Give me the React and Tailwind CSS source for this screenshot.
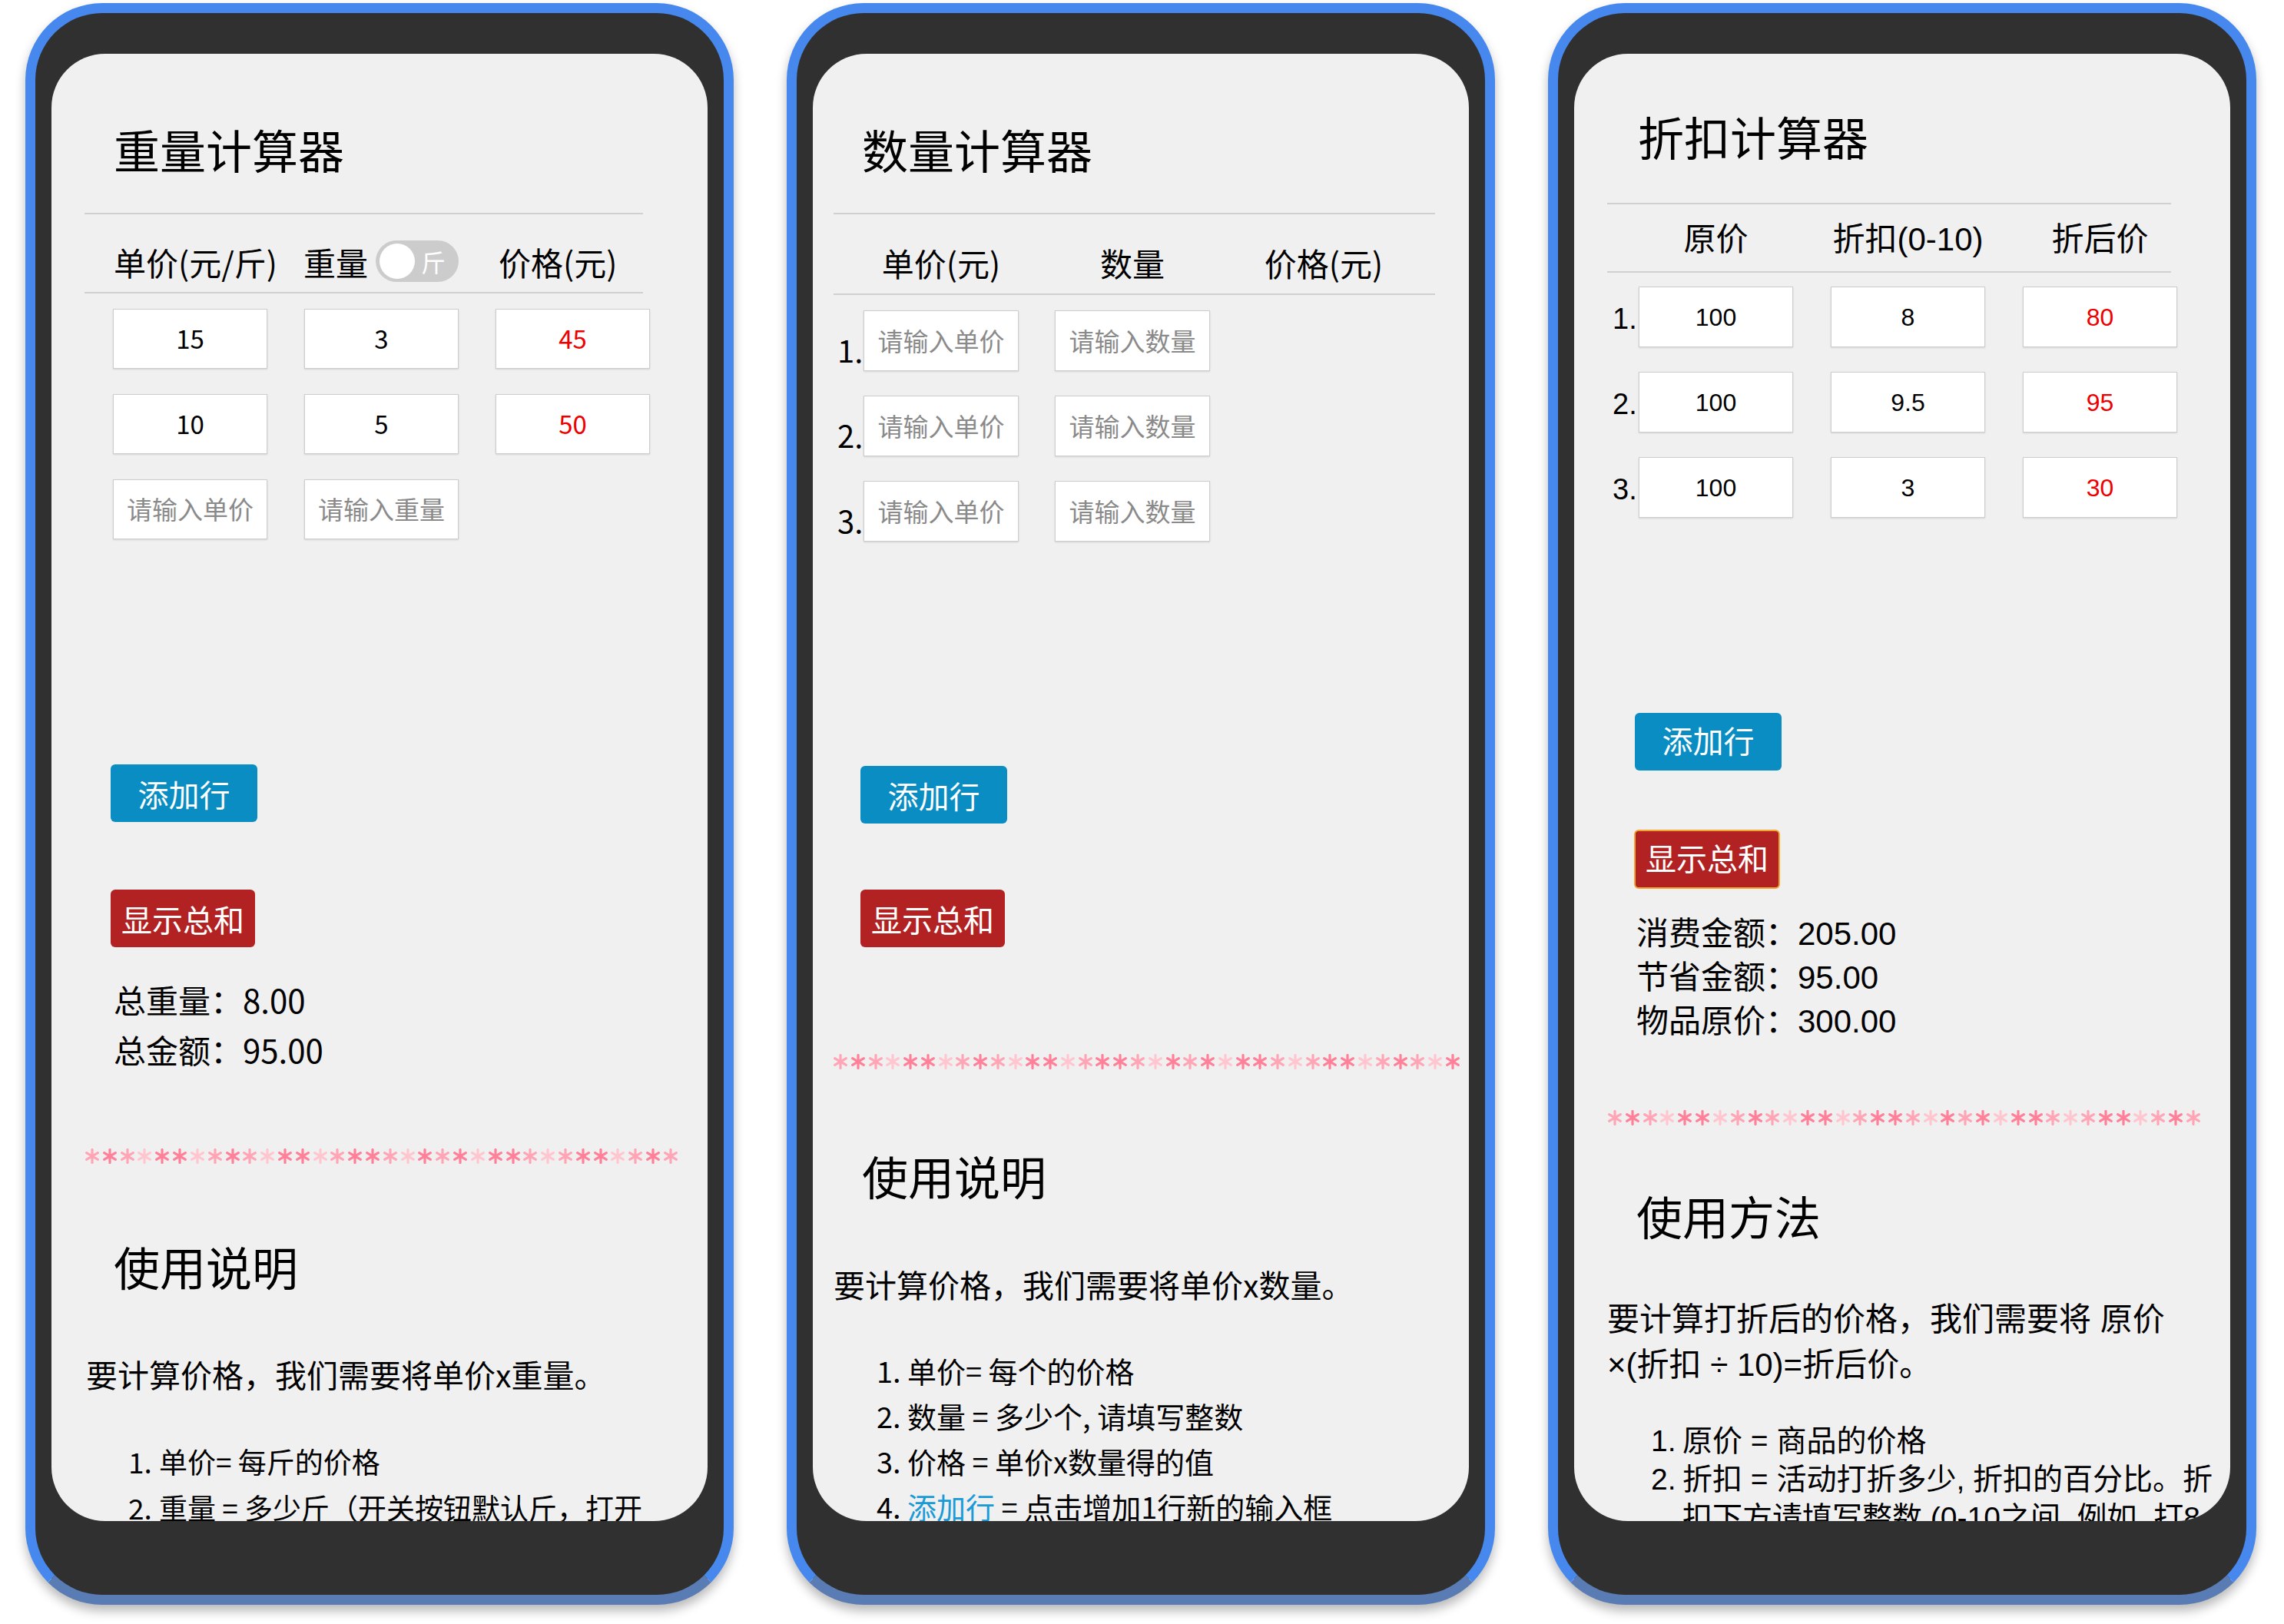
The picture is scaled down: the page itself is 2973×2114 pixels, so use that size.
const CJK = "font-['Noto_Sans_CJK_SC','Noto_Sans',sans-serif]";
const HEI = "font-['Liberation_Sans','Noto_Sans_CJK_SC',sans-serif]";

const STAR_PATTERN = 'LDLFDDFLDLFDDFLDDLFDLDFDDLFLDDFLDLFDDL';
const STAR_COLORS = { L: '#ffa5b6', D: '#ff8098', F: '#ffc6d0' };

function Stars({ count, width, className = '' }) {
  return (
    <div className={`flex h-[30px] items-center justify-between ${className}`} style={{ width }}>
      {Array.from({ length: count }).map((_, i) => (
        <svg key={i} width="20" height="20" viewBox="0 0 20 20">
          <g
            stroke={STAR_COLORS[STAR_PATTERN[i % STAR_PATTERN.length]]}
            strokeWidth="3.2"
            strokeLinecap="round"
          >
            <line x1="10" y1="1.5" x2="10" y2="18.5" />
            <line x1="2.6" y1="5.7" x2="17.4" y2="14.3" />
            <line x1="2.6" y1="14.3" x2="17.4" y2="5.7" />
          </g>
        </svg>
      ))}
    </div>
  );
}

function Phone({ children }) {
  return (
    <div className="h-[2085px] w-[922px] shrink-0 rounded-[100px] border-[13px] border-[#4688ee] border-b-[#5a7cb4] bg-[#303030] px-[21px] pb-[96px] pt-[53px] shadow-[0_8px_14px_rgba(0,0,0,0.28)]">
      <div className="h-full overflow-hidden rounded-[70px] bg-[#f0f0f0] text-black">
        {children}
      </div>
    </div>
  );
}

function Box({ children, value, red, className = '' }) {
  return (
    <div
      className={`flex items-center justify-center border border-[#cdcdcd] bg-white shadow-[0_1px_2px_rgba(0,0,0,0.12)] ${className} ${
        value == null ? 'text-[#8a8a8a]' : red ? 'text-[#ee0000]' : 'text-black'
      }`}
    >
      {value ?? children}
    </div>
  );
}

function AddButton({ className = '' }) {
  return (
    <div className={`flex h-[75px] w-[191px] items-center justify-center rounded-[6px] bg-[#0a8dc2] text-[40px] text-white ${className}`}>
      添加行
    </div>
  );
}

function SumButton({ className = '' }) {
  return (
    <div className={`flex h-[75px] w-[188px] items-center justify-center rounded-[6px] bg-[#b22222] text-[40px] text-white ${className}`}>
      显示总和
    </div>
  );
}

function WeightPhone() {
  const rows = [
    ['15', '3', '45'],
    ['10', '5', '50'],
    [null, null, undefined],
  ];
  return (
    <Phone>
      <div className={CJK}>
        <div className="h-[154px] pl-[81px] pt-[94px] text-[60px] leading-[60px]">重量计算器</div>
        <div className="ml-[43px] mt-[53px] h-[2px] w-[727px] bg-[#d0d0d0]" />
        <div className="ml-[81px] mt-[31px] flex h-[60px] items-center text-[42px]">
          <span className="w-[247px]">单价(元/斤)</span>
          <div className="flex w-[254px] items-center gap-[10px]">
            <span>重量</span>
            <div className="flex h-[54px] w-[108px] items-center rounded-full bg-[#cccccc] pl-[5px]">
              <div className="h-[46px] w-[46px] rounded-full bg-white" />
              <span className="ml-[8px] text-[32px] leading-none text-white">斤</span>
            </div>
          </div>
          <span>价格(元)</span>
        </div>
        <div className="ml-[43px] mt-[10px] h-[2px] w-[727px] bg-[#d0d0d0]" />
        <div className="ml-[80px] mt-[20px] flex flex-col gap-[33px] text-[33px]">
          {rows.map((r, i) => (
            <div key={i} className="flex gap-[48px]">
              <Box value={r[0]} className="h-[78px] w-[201px]">请输入单价</Box>
              <Box value={r[1]} className="h-[78px] w-[201px]">请输入重量</Box>
              {r[2] !== undefined && <Box value={r[2]} red className="h-[78px] w-[201px]" />}
            </div>
          ))}
        </div>
        <AddButton className="ml-[77px] mt-[293px]" />
        <SumButton className="ml-[77px] mt-[88px]" />
        <div className="ml-[81px] mt-[35px] text-[42px] leading-[65px]">
          <div>总重量：8.00</div>
          <div>总金额：95.00</div>
        </div>
        <Stars count={34} width={773} className="ml-[43px] mt-[92px]" />
        <div className="ml-[81px] mt-[98px] text-[60px] leading-[60px]">使用说明</div>
        <div className="ml-[45px] mt-[90px] text-[41px] leading-[41px]">要计算价格，我们需要将单价x重量。</div>
        <div className="ml-[100px] mt-[63px] w-[700px] text-[37px] leading-[60px]">
          <div className="flex">
            <span className="w-[40px] shrink-0">1.</span>
            <span>单价= 每斤的价格</span>
          </div>
          <div className="flex">
            <span className="w-[40px] shrink-0">2.</span>
            <span>重量 = 多少斤（开关按钮默认斤，打开为公斤，按公斤计算价格）</span>
          </div>
        </div>
      </div>
    </Phone>
  );
}

function CountPhone() {
  return (
    <Phone>
      <div className={CJK}>
        <div className="h-[154px] pl-[64px] pt-[94px] text-[60px] leading-[60px]">数量计算器</div>
        <div className="ml-[27px] mt-[53px] h-[2px] w-[783px] bg-[#d0d0d0]" />
        <div className="ml-[66px] mt-[31px] grid h-[60px] grid-cols-[202px_202px_202px] items-center gap-x-[47px] text-center text-[42px]">
          <span>单价(元)</span>
          <span>数量</span>
          <span>价格(元)</span>
        </div>
        <div className="ml-[27px] mt-[12px] h-[2px] w-[783px] bg-[#d0d0d0]" />
        <div className="ml-[32px] mt-[20px] flex flex-col gap-[32px]">
          {[1, 2, 3].map((n) => (
            <div key={n} className="flex items-end">
              <span className="w-[34px] pb-[8px] text-[40px] leading-none">{n}.</span>
              <div className="flex gap-[47px] text-[33px]">
                <Box className="h-[79px] w-[202px]">请输入单价</Box>
                <Box className="h-[79px] w-[202px]">请输入数量</Box>
              </div>
            </div>
          ))}
        </div>
        <AddButton className="ml-[62px] mt-[292px]" />
        <SumButton className="ml-[62px] mt-[86px]" />
        <Stars count={36} width={817} className="ml-[26px] mt-[134px]" />
        <div className="ml-[64px] mt-[103px] text-[60px] leading-[60px]">使用说明</div>
        <div className="ml-[27px] mt-[91px] text-[41px] leading-[41px]">要计算价格，我们需要将单价x数量。</div>
        <div className="ml-[83px] mt-[62px] w-[740px] text-[38px] leading-[59px]">
          <div className="flex">
            <span className="w-[40px] shrink-0">1.</span>
            <span>单价= 每个的价格</span>
          </div>
          <div className="flex">
            <span className="w-[40px] shrink-0">2.</span>
            <span>数量 = 多少个, 请填写整数</span>
          </div>
          <div className="flex">
            <span className="w-[40px] shrink-0">3.</span>
            <span>价格 = 单价x数量得的值</span>
          </div>
          <div className="flex">
            <span className="w-[40px] shrink-0">4.</span>
            <span>
              <span className="text-[#1a9bd7]">添加行</span> = 点击增加1行新的输入框
            </span>
          </div>
        </div>
      </div>
    </Phone>
  );
}

function DiscountPhone() {
  const rows = [
    ['100', '8', '80'],
    ['100', '9.5', '95'],
    ['100', '3', '30'],
  ];
  return (
    <Phone>
      <div className={HEI}>
        <div className="h-[143px] pl-[83px] pt-[83px] text-[60px] leading-[60px]">折扣计算器</div>
        <div className="ml-[43px] mt-[51px] h-[2px] w-[734px] bg-[#d0d0d0]" />
        <div className="ml-[84px] mt-[14px] grid h-[60px] grid-cols-[201px_201px_201px] items-center gap-x-[49px] text-center text-[42px]">
          <span>原价</span>
          <span>折扣(0-10)</span>
          <span>折后价</span>
        </div>
        <div className="ml-[43px] mt-[13px] h-[2px] w-[734px] bg-[#d0d0d0]" />
        <div className="ml-[50px] mt-[18px] flex flex-col gap-[32px]">
          {rows.map((r, i) => (
            <div key={i} className="flex items-end">
              <span className="w-[34px] pb-[18px] text-[38px] leading-none">{i + 1}.</span>
              <div className="flex gap-[49px] text-[32px]">
                <Box value={r[0]} className="h-[79px] w-[201px]" />
                <Box value={r[1]} className="h-[79px] w-[201px]" />
                <Box value={r[2]} red className="h-[79px] w-[201px]" />
              </div>
            </div>
          ))}
        </div>
        <AddButton className="ml-[79px] mt-[254px]" />
        <div className="ml-[78px] mt-[77px] flex h-[77px] w-[190px] items-center justify-center rounded-[6px] border-[2px] border-[#f2a531] bg-[#b22222] text-[40px] text-white">
          显示总和
        </div>
        <div className="ml-[81px] mt-[30px] text-[42px] leading-[57px]">
          <div>消费金额：205.00</div>
          <div>节省金额：95.00</div>
          <div>物品原价：300.00</div>
        </div>
        <Stars count={34} width={773} className="ml-[43px] mt-[82px]" />
        <div className="ml-[81px] mt-[88px] text-[60px] leading-[60px]">使用方法</div>
        <div className="ml-[43px] mt-[70px] text-[42px] leading-[59px]">
          要计算打折后的价格，我们需要将 原价
          <br /> ×(折扣 ÷ 10)=折后价。
        </div>
        <div className="ml-[100px] mt-[45px] w-[745px] text-[39px] leading-[50px]">
          <div className="flex">
            <span className="w-[41px] shrink-0">1.</span>
            <span>原价 = 商品的价格</span>
          </div>
          <div className="flex">
            <span className="w-[41px] shrink-0">2.</span>
            <span>折扣 = 活动打折多少, 折扣的百分比。折扣下方请填写整数 (0-10之间, 例如, 打8折请填写8)</span>
          </div>
        </div>
      </div>
    </Phone>
  );
}

export default function App() {
  return (
    <div className="flex h-[2114px] w-[2973px] gap-[69px] overflow-hidden bg-white pl-[33px] pt-[4px]">
      <WeightPhone />
      <CountPhone />
      <DiscountPhone />
    </div>
  );
}
